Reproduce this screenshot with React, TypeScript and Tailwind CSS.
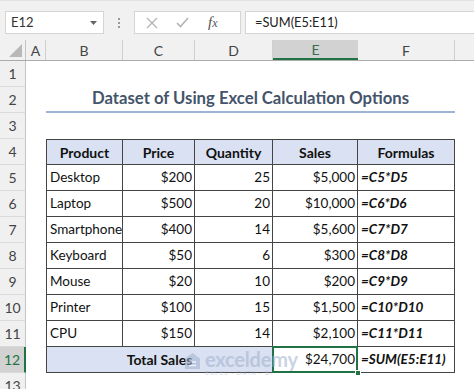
import React from "react";

const W = {
  rh: "w-[26px]",
  a: "w-[20px]",
  b: "w-[77px]",
  c: "w-[72px]",
  d: "w-[78px]",
  e: "w-[85px]",
  f: "w-[97px]",
};

const data = [
  ["Desktop", "$200", "25", "$5,000", "=C5*D5"],
  ["Laptop", "$500", "20", "$10,000", "=C6*D6"],
  ["Smartphone", "$400", "14", "$5,600", "=C7*D7"],
  ["Keyboard", "$50", "6", "$300", "=C8*D8"],
  ["Mouse", "$20", "10", "$200", "=C9*D9"],
  ["Printer", "$100", "15", "$1,500", "=C10*D10"],
  ["CPU", "$150", "14", "$2,100", "=C11*D11"],
];

function RowHead({ n, active }: { n: number; active?: boolean }) {
  return (
    <div
      className={
        "w-[26px] shrink-0 h-full flex items-center justify-center text-[14px] border-b border-[#dadada] " +
        (active
          ? "bg-[#d2d2d2] text-[#217346] border-r-2 border-r-[#217346]"
          : "bg-[#f0f0f0] text-[#444] border-r border-r-[#c4c4c4]")
      }
    >
      {n}
    </div>
  );
}

function Row({ n, active, children }: { n: number; active?: boolean; children?: React.ReactNode }) {
  return (
    <div className="flex h-[26px]">
      <RowHead n={n} active={active} />
      <div className={W.a + " shrink-0"} />
      {children}
    </div>
  );
}

const cellBase = "h-full shrink-0 border-r border-b border-[#454545] flex items-center text-[13.5px] text-[#111]";
const fCell = " pl-[3px] font-bold italic text-[12.5px] text-[#0070c0]";

export default function App() {
  return (
    <div className="w-[474px] h-[389px] overflow-hidden bg-white relative font-['Lato',sans-serif]">
      {/* formula bar */}
      <div className="h-[40px] bg-[#f1f1f1] flex items-start pt-[10px] border-t border-[#e2e2e2]">
        <div className="ml-[5px] w-[99px] h-[23px] bg-white border border-[#d5d5d5] flex items-center justify-between pl-[5px] pr-[6px]">
          <span className="text-[13px] text-[#333]">E12</span>
          <svg width="7" height="4" viewBox="0 0 7 4"><path d="M0 0h7L3.5 4z" fill="#666" /></svg>
        </div>
        <div className="w-[30px] h-[23px] flex flex-col items-center justify-center gap-[2px]">
          <span className="w-[2px] h-[2px] bg-[#9a9a9a]" />
          <span className="w-[2px] h-[2px] bg-[#9a9a9a]" />
          <span className="w-[2px] h-[2px] bg-[#9a9a9a]" />
        </div>
        <div className="w-[107px] h-[23px] bg-white border border-[#d5d5d5] flex items-center">
          <svg className="ml-[11px]" width="12" height="12" viewBox="0 0 12 12">
            <path d="M1 1L11 11M11 1L1 11" stroke="#b3b3b3" strokeWidth="1.3" fill="none" />
          </svg>
          <svg className="ml-[18px]" width="13" height="11" viewBox="0 0 13 11">
            <path d="M1 6L4.5 9.5L12 1" stroke="#b3b3b3" strokeWidth="1.6" fill="none" />
          </svg>
          <span className="ml-[19px] text-[15px] italic text-[#555] font-['Liberation_Serif',serif]">
            f<span className="text-[12px]">x</span>
          </span>
        </div>
        <div className="ml-[4px] flex-1 h-[23px] bg-white border border-[#d5d5d5] border-r-0 flex items-center pl-[9px]">
          <span className="text-[12.8px] text-[#222]">=SUM(E5:E11)</span>
        </div>
      </div>

      {/* column headers */}
      <div className="flex h-[21px] bg-[#f1f1f1] border-b border-[#ababab] text-[14px] text-[#444]">
        <div className="w-[26px] shrink-0 relative border-r border-[#c4c4c4]">
          <svg className="absolute right-[3px] bottom-[3px]" width="13" height="13" viewBox="0 0 13 13">
            <path d="M13 0V13H0z" fill="#b8b8b8" />
          </svg>
        </div>
        <div className={W.a + " shrink-0 flex items-center justify-center border-r border-[#d0d0d0]"}>A</div>
        <div className={W.b + " shrink-0 flex items-center justify-center border-r border-[#d0d0d0]"}>B</div>
        <div className={W.c + " shrink-0 flex items-center justify-center border-r border-[#d0d0d0]"}>C</div>
        <div className={W.d + " shrink-0 flex items-center justify-center border-r border-[#d0d0d0]"}>D</div>
        <div className={W.e + " shrink-0 flex items-center justify-center bg-[#d2d2d2] border-b-2 border-[#217346] text-[#3a6b4c]"}>E</div>
        <div className={W.f + " shrink-0 flex items-center justify-center border-r border-[#d0d0d0]"}>F</div>
        <div className="flex-1" />
      </div>

      <Row n={1} />
      <Row n={2}>
        <div className="w-[409px] shrink-0 h-full border-b-2 border-[#9fb3d6] flex items-center justify-center">
          <span className="text-[16.7px] font-bold text-[#44546a]">Dataset of Using Excel Calculation Options</span>
        </div>
      </Row>
      <Row n={3} />
      <Row n={4}>
        <div className="flex bg-[#d9e1f2] border-t border-[#454545] font-bold">
          <div className={cellBase + " " + W.b + " border-l justify-center text-[14px]"}>Product</div>
          <div className={cellBase + " " + W.c + " justify-center text-[14px]"}>Price</div>
          <div className={cellBase + " " + W.d + " justify-center text-[14px]"}>Quantity</div>
          <div className={cellBase + " " + W.e + " justify-center text-[14px]"}>Sales</div>
          <div className={cellBase + " " + W.f + " justify-center text-[14px]"}>Formulas</div>
        </div>
      </Row>
      {data.map((r, i) => (
        <Row key={i} n={i + 5}>
          <div className={cellBase + " " + W.b + " border-l pl-[3px]"}>{r[0]}</div>
          <div className={cellBase + " " + W.c + " justify-end pr-[2px]"}>{r[1]}</div>
          <div className={cellBase + " " + W.d + " justify-end pr-[2px]"}>{r[2]}</div>
          <div className={cellBase + " " + W.e + " justify-end pr-[2px]"}>{r[3]}</div>
          <div className={cellBase + " " + W.f + fCell}>{r[4]}</div>
        </Row>
      ))}
      <Row n={12} active>
        <div className={cellBase + " w-[227px] border-l justify-center font-bold text-[14px] bg-[#d9e1f2]"}>Total Sales</div>
        <div className={cellBase + " " + W.e + " justify-end pr-[2px] relative"}>
          <div className="absolute -left-[1px] -top-[1px] w-[86px] h-[27px] border-2 border-[#217346]" />
          <div className="absolute -right-[4px] -bottom-[4px] w-[6px] h-[6px] bg-[#217346] border border-white" />
          $24,700
        </div>
        <div className={cellBase + " " + W.f + fCell}>=SUM(E5:E11)</div>
      </Row>
      <Row n={13} />

      {/* watermark */}
      <div className="absolute left-[184px] top-[349px] flex items-start gap-[4px] opacity-55 pointer-events-none">
        <svg width="17" height="18" viewBox="0 0 17 18" className="mt-[3px]">
          <path d="M8.5 1L16 6.5V17H1V6.5z" fill="#9fb1cc" />
          <path d="M5 10h7M5 13.5h7" stroke="#fff" strokeWidth="1.6" />
        </svg>
        <div className="flex flex-col leading-none">
          <span className="text-[20px] font-bold text-[#9fb1cc] tracking-[-0.2px]">exceldemy</span>
          <span className="text-[6px] text-[#9fb1cc] tracking-[1.2px] mt-[1px]">EXCEL · DATA · BI</span>
        </div>
      </div>
    </div>
  );
}
